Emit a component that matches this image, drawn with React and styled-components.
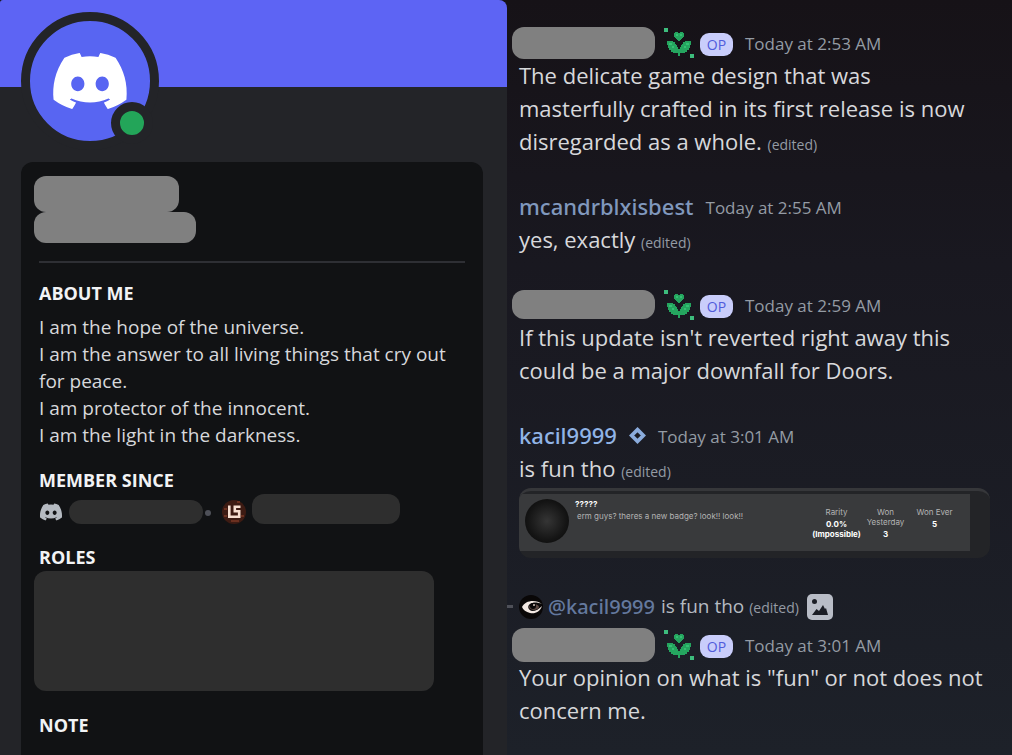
import React from 'react';
import styled, { createGlobalStyle } from 'styled-components';
import { FaDiscord } from 'react-icons/fa';

const GlobalStyle = createGlobalStyle`
  * {
    box-sizing: border-box;
  }

  body {
    margin: 0;
    background: #16141a;
    font-family: 'Open Sans', 'Noto Sans', sans-serif;
    color: #d7d8db;
  }

  h2, h3, p, ul {
    margin: 0;
    padding: 0;
  }
`;

const Page = styled.div`
  display: grid;
  grid-template-columns: minmax(0, 507fr) minmax(0, 505fr);
  height: 100vh;
  overflow: hidden;
  background: linear-gradient(180deg, #161217 0%, #191820 35%, #1d2129 100%);
`;

const Profile = styled.aside`
  background: #232428;
  border-radius: 3px 8px 0 0;
  overflow: hidden;
`;

const Banner = styled.div`
  height: 87px;
  padding: 12px 21px;
  background: #5d64f4;
`;

const Avatar = styled.div`
  position: relative;
  width: 138px;
  height: 138px;
  border: 9px solid #232428;
  border-radius: 50%;
  background: #5865f2;
  display: flex;
  align-items: center;
  justify-content: center;
  color: #fff;
`;

const Status = styled.span`
  position: absolute;
  right: -3px;
  bottom: -3px;
  width: 42px;
  height: 42px;
  border: 9px solid #232428;
  border-radius: 50%;
  background: #23a559;
`;

const Card = styled.section`
  margin: 75px 24px 0 21px;
  padding: 14px 18px;
  height: 640px;
  border-radius: 12px;
  background: #111214;
`;

const Redacted = styled.div`
  width: ${props => props.$width}px;
  max-width: 100%;
  height: ${props => props.$height}px;
  border-radius: 12px;
  background: ${props => (props.$dark ? '#2e2e2e' : '#808080')};
  flex: none;
`;

const Names = styled.div`
  margin-left: -5px;
  padding-bottom: 18px;
`;

const Divider = styled.hr`
  margin: 0 0 19px;
  border: 0;
  border-top: 2px solid #2e2f34;
`;

const Heading = styled.h2`
  font-size: 18px;
  line-height: 22px;
  font-weight: 700;
  color: #f2f3f5;
`;

const Bio = styled.p`
  margin: 10px 0 20px;
  font-size: 19px;
  line-height: 27px;
  white-space: pre-line;
`;

const Since = styled.div`
  display: flex;
  align-items: flex-end;
  gap: 6px;
  height: 30px;
  margin: 3px 0 22px;
  color: #b5bac1;
`;

const Dot = styled.span`
  width: 6px;
  height: 6px;
  margin: 0 5px 8px -4px;
  border-radius: 50%;
  background: #4e5058;
`;

const Roles = styled.div`
  margin: 3px 0 23px -5px;
`;

const Chat = styled.main`
  padding: 26px 24px 0 12px;
`;

const Message = styled.article`
  margin-bottom: 32px;
`;

const MessageHeader = styled.header`
  display: flex;
  align-items: center;
  height: 33px;
  margin-left: ${props => (props.$hidden ? '-7px' : '0')};
  white-space: nowrap;
`;

const Username = styled.h3`
  font-family: 'Noto Sans', sans-serif;
  font-size: 22px;
  line-height: 33px;
  font-weight: 500;
  color: ${props => props.$color};
`;

const Emblem = styled.svg`
  flex: none;
  margin: 0 6px 0 9px;
`;

const RoleIcon = styled.svg`
  flex: none;
  margin-left: 12px;
`;

const OpTag = styled.span`
  width: 33px;
  height: 23px;
  margin-top: 3px;
  border-radius: 9px;
  background: #c9cdfb;
  color: #505cdc;
  font-size: 14px;
  line-height: 23px;
  text-align: center;
`;

const Time = styled.time`
  margin: 3px 0 0 12px;
  font-size: 17px;
  line-height: 24px;
  color: #949ba4;
`;

const Text = styled.p`
  font-size: 22px;
  line-height: 33px;
`;

const Edited = styled.span`
  font-size: 14px;
  line-height: 14px;
  color: #949ba4;
`;

const Embed = styled.figure`
  margin: 3px 0 0;
  width: 471px;
  max-width: calc(100% + 12px);
  padding-right: 20px;
  border-top: 3px solid #36373a;
  border-radius: 12px;
  background: #232427;
  overflow: hidden;
`;

const EmbedBody = styled.div`
  display: flex;
  margin: 3px 0 7px;
  height: 57px;
  padding: 5px 11px 0 6px;
  background: #393a3c;
  font-family: Inter, sans-serif;
  font-size: 8px;
  line-height: 10px;
  color: #b4b4b4;
`;

const Orb = styled.div`
  width: 44px;
  height: 44px;
  margin-right: 6px;
  border-radius: 50%;
  background: radial-gradient(circle, #353535 0%, #151515 60%, #050505 100%);
  flex: none;
`;

const BadgeInfo = styled.div`
  flex: 1;
  white-space: nowrap;

  strong {
    display: block;
    color: #fff;
  }

  p {
    padding: 2px;
  }
`;

const Stats = styled.dl`
  display: flex;
  margin: 8px 0 0;
  text-align: center;

  dt {
    margin-bottom: 2px;
  }

  dd {
    margin: 0;
    font-weight: 700;
    color: #fff;
  }
`;

const Stat = styled.div`
  width: 49px;
`;

const Reply = styled.div`
  display: flex;
  align-items: center;
  height: 33px;
  margin: 0 0 5px -12px;
  font-size: 19px;
  line-height: 27px;
  color: #b5bac1;
  white-space: nowrap;
`;

const ReplyLine = styled.span`
  width: 6px;
  height: 3px;
  margin-right: 6px;
  background: #4e5058;
`;

const ReplyName = styled.span`
  margin: 0 6px 0 5px;
  font-family: 'Noto Sans', sans-serif;
  font-size: 20px;
  font-weight: 500;
  color: #64799e;
`;

const ReplyIcon = styled.svg`
  flex: none;
  margin-left: ${props => props.$space || 0}px;
`;

const BIO = `I am the hope of the universe.
I am the answer to all living things that cry out for peace.
I am protector of the innocent.
I am the light in the darkness.`;

function Flower() {
  return (
    <Emblem width="30" height="30" viewBox="0 0 30 30" aria-hidden="true">
      <path fill="#3dbd7d" d="M0 0h4v4H0zM26 26h4v4h-4z" />
      <path
        fill="#25a55f"
        d="M11 4h3v1h2V4h3v1h1v4h-1v1h-1v1h-1v1h-1v1h-2v-1h-1v-1h-1v-1h-1V9h-1V5h1zM3 13h6v1h2v2h1v1h1v2h1v2h2v-2h1v-2h1v-1h1v-2h2v-1h6v4h-1v3h-1v2h-2v2h-2v1h-5v3h-2v-3H9v-1H7v-2H5v-2H4v-3H3z"
      />
      <path fill="#33c173" d="M12 6h2v2h-2zM16 6h2v2h-2zM5 15h3v2H5zM8 18h2v2H8zM20 18h2v2h-2zM22 15h3v2h-3z" />
    </Emblem>
  );
}

function ServerIcon() {
  return (
    <svg width="24" height="24" viewBox="0 0 24 24" aria-hidden="true">
      <circle cx="12" cy="12" r="12" fill="#3d1b13" />
      <path fill="#6b3020" d="M2 8h3v2H2zM2 15h3v2H2zM19 15h3v2h-3zM15 1h3v2h-3zM9 20h8v2H9z" />
      <path fill="none" stroke="#f6ded0" strokeWidth="2.600" d="M7.300 5.500v11.200h4M18.500 6.800h-5.700v4.400h4.400v5.500h-6" />
    </svg>
  );
}

function EyeAvatar() {
  return (
    <ReplyIcon width="24" height="24" viewBox="0 0 24 24" aria-hidden="true">
      <circle cx="12" cy="12" r="12" fill="#090707" />
      <path fill="#f3e9e3" d="M3 12C6 5 17 4 23 9c-5-2-9-2-12 0-3 2-2 6 2 7 4 0 7-2 10-5-2 6-7 8-12 7-4-1-7-3-8-6z" />
      <ellipse cx="15" cy="12" rx="5" ry="3" fill="#5b4741" />
      <circle cx="14" cy="11" r="3" fill="#080606" />
      <circle cx="15" cy="10" r="1" fill="#d4c4bd" />
    </ReplyIcon>
  );
}

function ImageIcon() {
  return (
    <ReplyIcon $space={8} width="26" height="26" viewBox="0 0 26 26" role="img" aria-label="Image">
      <rect width="26" height="26" rx="5" fill="#b9bdc7" />
      <circle cx="7.500" cy="7.500" r="2.500" fill="#1c1e26" />
      <path fill="#1c1e26" d="M5 21l4.500-6 2.500 2 4-6 2 4 1-1 2 7z" />
    </ReplyIcon>
  );
}

function OpHeader({ width, height, time }) {
  return (
    <MessageHeader $hidden>
      <Redacted $width={width} $height={height} />
      <Flower />
      <OpTag>OP</OpTag>
      <Time>{time}</Time>
    </MessageHeader>
  );
}

function App() {
  return (
    <>
      <GlobalStyle />
      <Page>
        <Profile>
          <Banner>
            <Avatar>
              <FaDiscord size={80} />
              <Status />
            </Avatar>
          </Banner>
          <Card>
            <Names>
              <Redacted $width={145} $height={36} />
              <Redacted $width={162} $height={31} />
            </Names>
            <Divider />
            <Heading>ABOUT ME</Heading>
            <Bio>{BIO}</Bio>
            <Heading>MEMBER SINCE</Heading>
            <Since>
              <FaDiscord size={24} />
              <Redacted $dark $width={134} $height={24} />
              <Dot />
              <ServerIcon />
              <Redacted $dark $width={148} $height={30} />
            </Since>
            <Heading>ROLES</Heading>
            <Roles>
              <Redacted $dark $width={400} $height={120} />
            </Roles>
            <Heading>NOTE</Heading>
          </Card>
        </Profile>

        <Chat>
          <Message>
            <OpHeader width={143} height={32} time="Today at 2:53 AM" />
            <Text>
              The delicate game design that was masterfully crafted in its first release is now
              disregarded as a whole. <Edited>(edited)</Edited>
            </Text>
          </Message>

          <Message>
            <MessageHeader>
              <Username $color="#8098bd">mcandrblxisbest</Username>
              <Time>Today at 2:55 AM</Time>
            </MessageHeader>
            <Text>yes, exactly <Edited>(edited)</Edited></Text>
          </Message>

          <Message>
            <OpHeader width={143} height={29} time="Today at 2:59 AM" />
            <Text>If this update isn't reverted right away this could be a major downfall for Doors.</Text>
          </Message>

          <Message>
            <MessageHeader>
              <Username $color="#91b4e6">kacil9999</Username>
              <RoleIcon width="17" height="17" viewBox="0 0 16 16" aria-hidden="true">
                <path d="M8 2.500L13.500 8 8 13.500 2.500 8z" fill="none" stroke="#8bacdd" strokeWidth="3.500" />
              </RoleIcon>
              <Time>Today at 3:01 AM</Time>
            </MessageHeader>
            <Text>is fun tho <Edited>(edited)</Edited></Text>
            <Embed>
              <EmbedBody>
                <Orb />
                <BadgeInfo>
                  <strong>?????</strong>
                  <p>erm guys? theres a new badge? look!! look!!</p>
                </BadgeInfo>
                <Stats>
                  <Stat>
                    <dt>Rarity</dt>
                    <dd>0.0% (Impossible)</dd>
                  </Stat>
                  <Stat>
                    <dt>Won Yesterday</dt>
                    <dd>3</dd>
                  </Stat>
                  <Stat>
                    <dt>Won Ever</dt>
                    <dd>5</dd>
                  </Stat>
                </Stats>
              </EmbedBody>
            </Embed>
          </Message>

          <Message>
            <Reply>
              <ReplyLine />
              <EyeAvatar />
              <ReplyName>@kacil9999</ReplyName>
              <span>is fun tho <Edited>(edited)</Edited></span>
              <ImageIcon />
            </Reply>
            <OpHeader width={143} height={34} time="Today at 3:01 AM" />
            <Text>Your opinion on what is "fun" or not does not concern me.</Text>
          </Message>
        </Chat>
      </Page>
    </>
  );
}

export default App;
